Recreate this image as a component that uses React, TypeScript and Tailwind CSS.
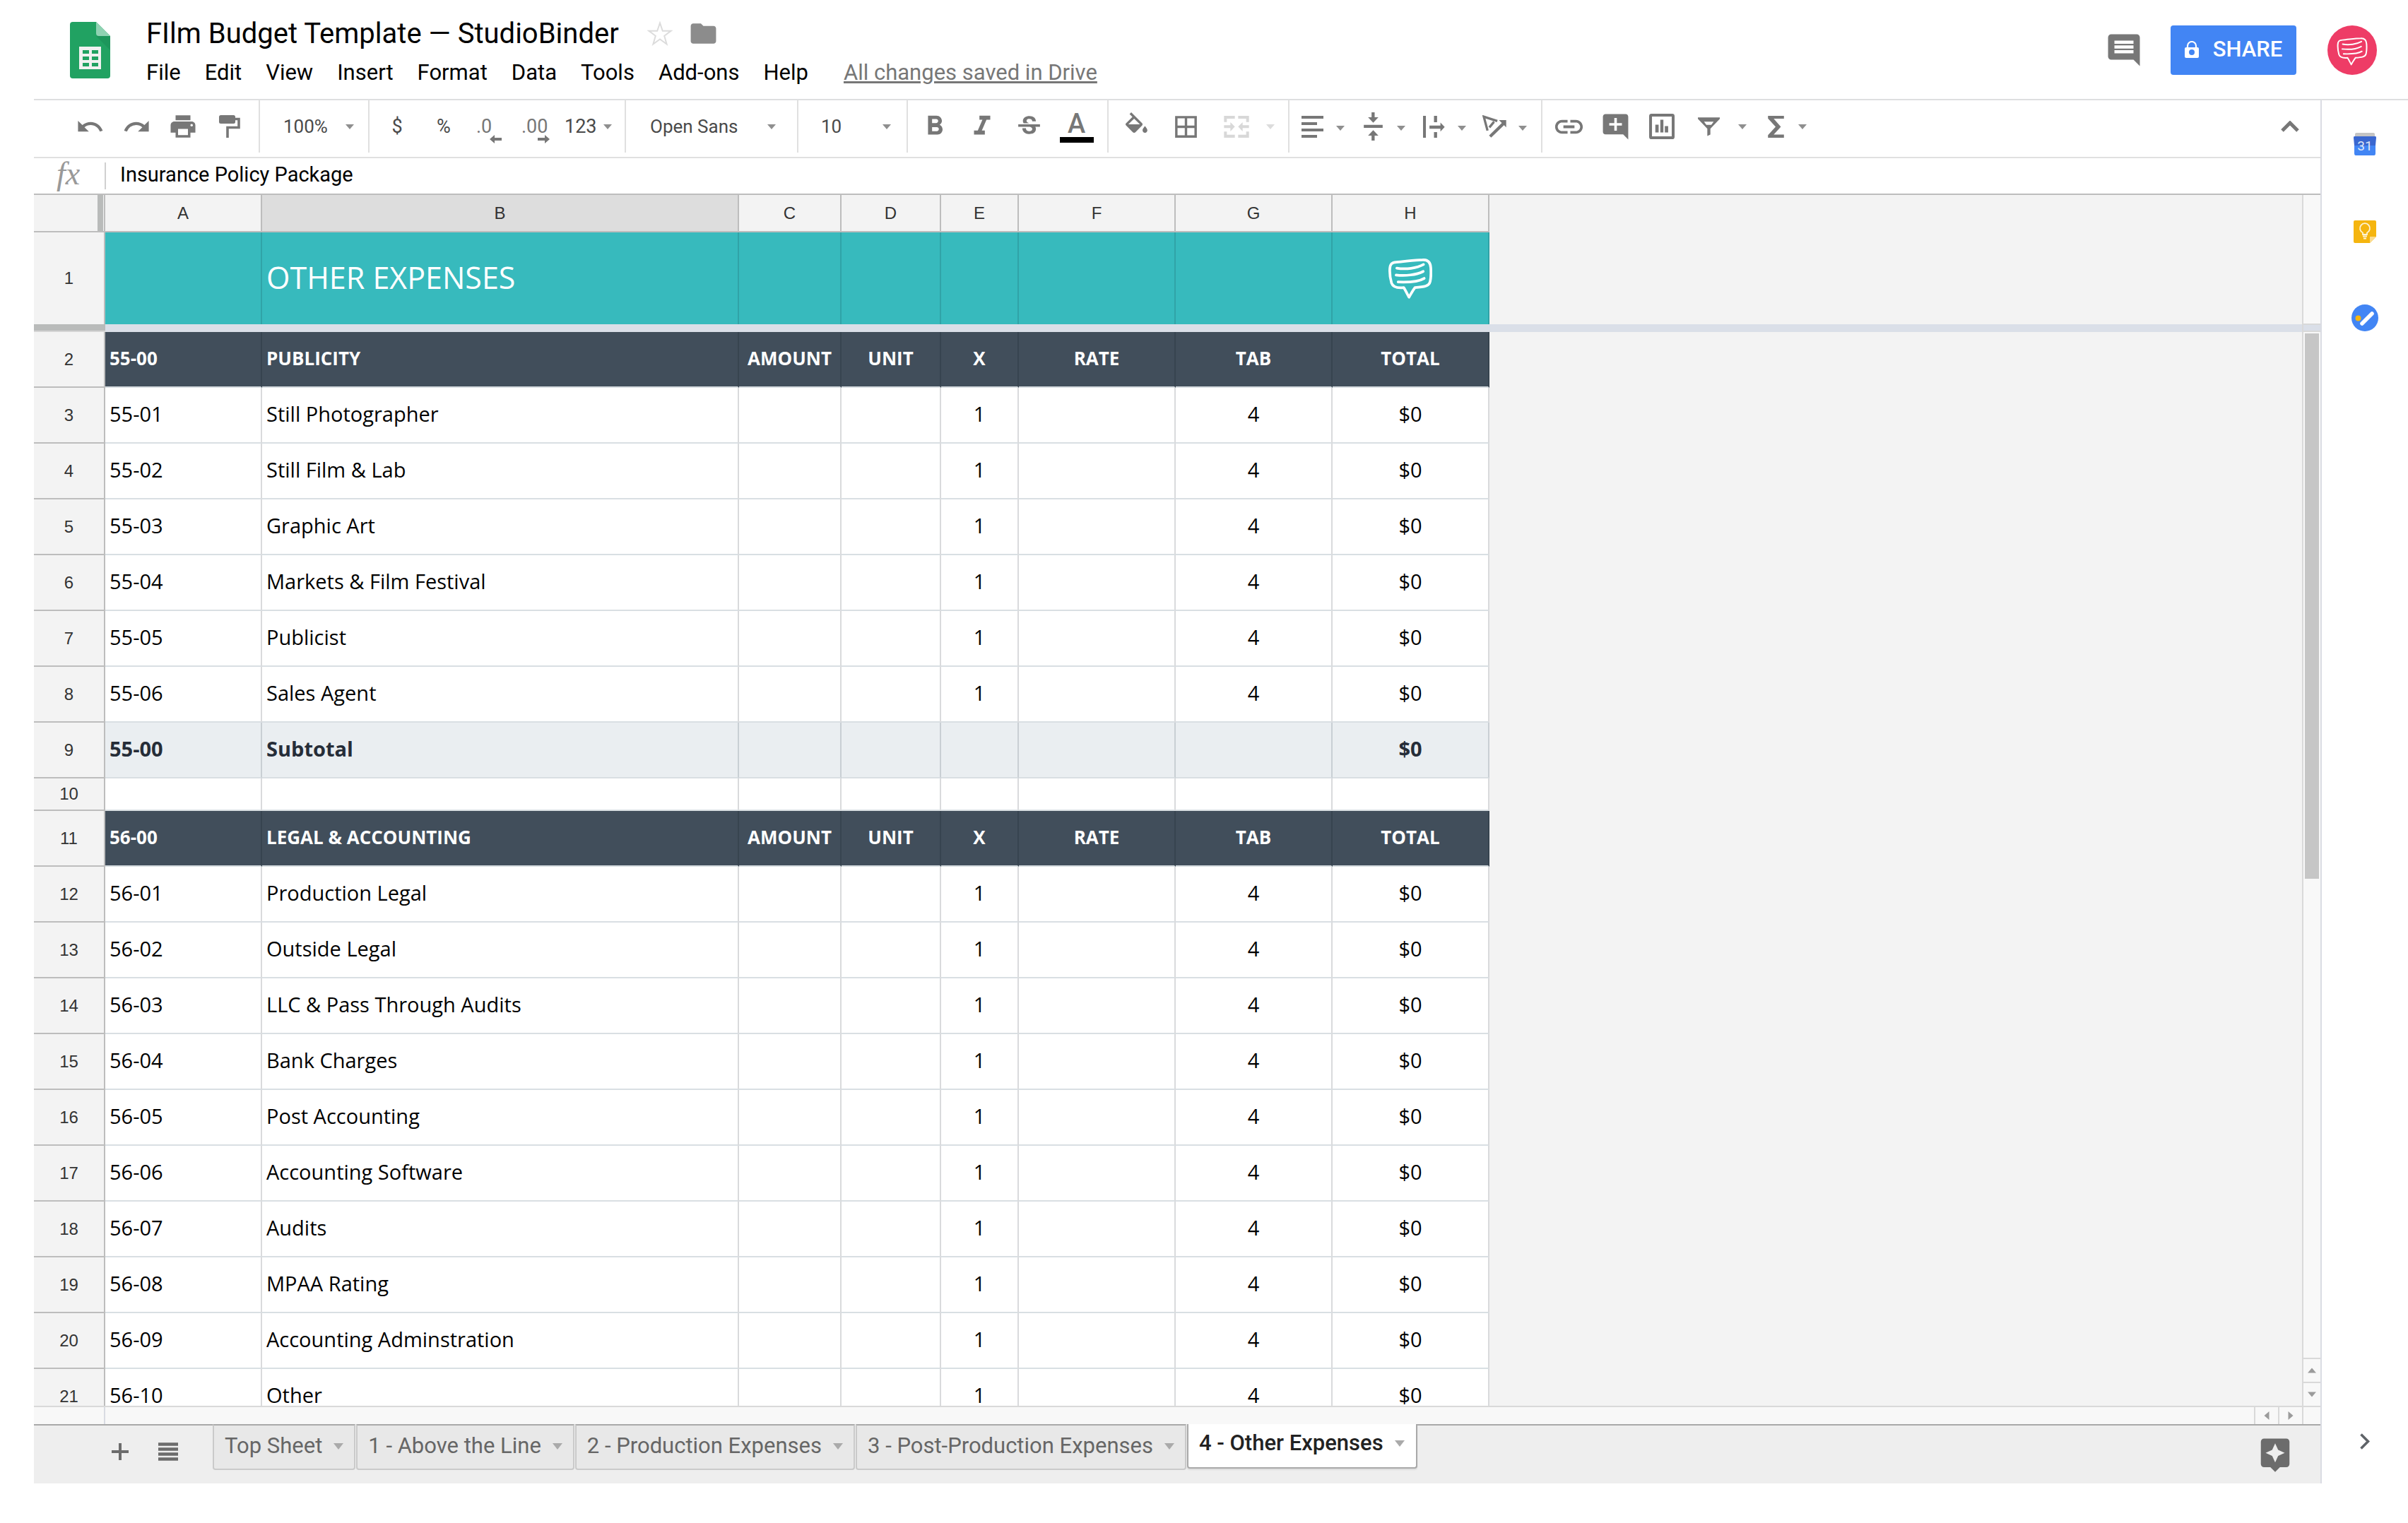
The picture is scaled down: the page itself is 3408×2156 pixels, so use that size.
import React from "react";
import {
  MdUndo,
  MdRedo,
  MdPrint,
  MdFormatBold,
  MdFormatItalic,
  MdStrikethroughS,
  MdBorderAll,
  MdLink,
  MdAddComment,
  MdComment,
  MdFolder,
  MdAssistant,
} from "react-icons/md";

type Kind = "head" | "item" | "subtotal" | "blank";
type Row = { n: number; kind: Kind; code?: string; name?: string };

const COLUMNS = ["A", "B", "C", "D", "E", "F", "G", "H"];

const ROWS: Row[] = [
  { n: 2, kind: "head", code: "55-00", name: "PUBLICITY" },
  { n: 3, kind: "item", code: "55-01", name: "Still Photographer" },
  { n: 4, kind: "item", code: "55-02", name: "Still Film & Lab" },
  { n: 5, kind: "item", code: "55-03", name: "Graphic Art" },
  { n: 6, kind: "item", code: "55-04", name: "Markets & Film Festival" },
  { n: 7, kind: "item", code: "55-05", name: "Publicist" },
  { n: 8, kind: "item", code: "55-06", name: "Sales Agent" },
  { n: 9, kind: "subtotal", code: "55-00", name: "Subtotal" },
  { n: 10, kind: "blank" },
  { n: 11, kind: "head", code: "56-00", name: "LEGAL & ACCOUNTING" },
  { n: 12, kind: "item", code: "56-01", name: "Production Legal" },
  { n: 13, kind: "item", code: "56-02", name: "Outside Legal" },
  { n: 14, kind: "item", code: "56-03", name: "LLC & Pass Through Audits" },
  { n: 15, kind: "item", code: "56-04", name: "Bank Charges" },
  { n: 16, kind: "item", code: "56-05", name: "Post Accounting" },
  { n: 17, kind: "item", code: "56-06", name: "Accounting Software" },
  { n: 18, kind: "item", code: "56-07", name: "Audits" },
  { n: 19, kind: "item", code: "56-08", name: "MPAA Rating" },
  { n: 20, kind: "item", code: "56-09", name: "Accounting Adminstration" },
  { n: 21, kind: "item", code: "56-10", name: "Other" },
];

const VALUES: Record<Kind, string[]> = {
  head: ["AMOUNT", "UNIT", "X", "RATE", "TAB", "TOTAL"],
  item: ["", "", "1", "", "4", "$0"],
  subtotal: ["", "", "", "", "", "$0"],
  blank: ["", "", "", "", "", ""],
};

const ROW_STYLE: Record<Kind, string> = {
  head: "h-[79px] bg-[#414e5b] text-[26px] font-bold text-white",
  item: "h-[79px] bg-white text-[29px] text-black",
  subtotal: "h-[79px] bg-[#eaeef1] text-[29px] font-bold text-[#262d38]",
  blank: "h-[46px] bg-white text-[24px]",
};

const CELL_BORDER: Record<Kind, string> = {
  head: "border-r-[#374450] border-b-[#d6dce0]",
  item: "border-r-[#d9dadc] border-b-[#d9dfe3]",
  subtotal: "border-r-[#c9cfd4] border-b-[#d9dfe3]",
  blank: "border-r-[#d9dadc] border-b-[#d9dfe3]",
};

function Caret({ className = "text-[#8f8f8f]" }: { className?: string }) {
  return (
    <svg width="12" height="7" viewBox="0 0 12 7" className={`shrink-0 ${className}`} aria-hidden="true">
      <path d="M0 0h12L6 7z" fill="currentColor" />
    </svg>
  );
}

function BubbleLogo({ className, stroke }: { className: string; stroke: number }) {
  return (
    <svg
      viewBox="0 0 132 122"
      className={className}
      fill="none"
      stroke="#fff"
      strokeWidth={stroke}
      strokeLinecap="round"
      strokeLinejoin="round"
      aria-hidden="true"
    >
      <path d="M24 11C50 9 80 4 103 4C120 3 127 12 128 28C129 44 129 58 126 70C123 84 108 86 80 88C74 96 68 107 62 117C56 106 51 96 46 88C28 90 14 88 9 74C5 60 3 44 4 30C5 16 10 12 24 11Z" />
      <path d="M25 29C52 34 86 29 106 18" />
      <path d="M23 50C50 53 84 50 105 39" />
      <path d="M29 71C55 72 90 71 108 60" />
    </svg>
  );
}

function SheetsLogo() {
  return (
    <svg viewBox="0 0 57 80" className="h-20 w-[57px]" aria-hidden="true">
      <path d="M4 0H37L57 20V76Q57 80 53 80H4Q0 80 0 76V4Q0 0 4 0Z" fill="#21a262" />
      <path d="M37 20H57V40Z" fill="#1a8a53" opacity=".5" />
      <path d="M37 0L57 20H41Q37 20 37 16Z" fill="#8fd2b2" />
      <path
        fillRule="evenodd"
        fill="#f1f1f1"
        d="M13 35H44V67H13ZM18 40V45H27V40ZM31 40V45H40V40ZM18 49V54H27V49ZM31 49V54H40V49ZM18 58V63H27V58ZM31 58V63H40V58Z"
      />
    </svg>
  );
}

function PaintRoller() {
  return (
    <svg width="30" height="32" viewBox="0 0 30 32" aria-hidden="true">
      <rect x="0" y="0" width="23" height="12" rx="2.5" fill="currentColor" />
      <path d="M22 5.500H28V17.500H12V32" fill="none" stroke="currentColor" strokeWidth="3.600" />
    </svg>
  );
}

function PaintBucket() {
  return (
    <svg width="31" height="29" viewBox="3 0 18 17" aria-hidden="true">
      <path
        fill="currentColor"
        d="M16.560 8.940L7.620 0 6.210 1.410l2.380 2.380-5.150 5.150a1.490 1.490 0 0 0 0 2.120l5.500 5.500c.290.290.680.440 1.060.440s.770-.150 1.060-.440l5.500-5.500c.590-.580.590-1.530 0-2.120zM5.210 10L10 5.210 14.790 10H5.210zM19 11.500s-2 2.170-2 3.500c0 1.100.900 2 2 2s2-.900 2-2c0-1.330-2-3.500-2-3.500z"
      />
    </svg>
  );
}

function MergeCells() {
  return (
    <svg width="36" height="31" viewBox="0 0 106 93" aria-hidden="true">
      <path
        fill="currentColor"
        d="M0 0H46V12H12V26H0ZM60 0H106V26H94V12H60ZM0 67H12V80H46V93H0ZM94 67H106V93H60V80H94ZM0 40H27V27L46 46 27 66V52H0ZM106 40H79V27L60 46 79 66V52H106Z"
      />
    </svg>
  );
}

function AlignLeft() {
  return (
    <svg width="31" height="31" viewBox="0 0 31 31" aria-hidden="true">
      <path fill="currentColor" d="M0 0H31V4H0ZM0 9H22V13H0ZM0 18H31V22H0ZM0 27H22V31H0Z" />
    </svg>
  );
}

function AlignMiddle() {
  return (
    <svg width="27" height="40" viewBox="0 0 80 120" aria-hidden="true">
      <path fill="currentColor" d="M0 53H80V66H0ZM33 0H46V21H62L40 44 18 21H33ZM33 120H46V99H62L40 76 18 99H33Z" />
    </svg>
  );
}

function WrapText() {
  return (
    <svg width="31" height="31" viewBox="0 0 92 92" aria-hidden="true">
      <path fill="currentColor" d="M0 0H12V92H0ZM46 0H59V27H46ZM46 68H59V92H46ZM27 41H73V28L91 47 73 66V54H27Z" />
    </svg>
  );
}

function RotateText() {
  return (
    <svg width="34" height="32" viewBox="0 0 103 96" aria-hidden="true">
      <path d="M22 66L6 6L64 25M30 52L50 28" fill="none" stroke="currentColor" strokeWidth="10" />
      <path d="M33 91L92 34" stroke="currentColor" strokeWidth="13" />
      <path d="M71 21H102V52Z" fill="currentColor" />
    </svg>
  );
}

function InsertChart() {
  return (
    <svg width="36" height="36" viewBox="0 0 107 107" aria-hidden="true">
      <rect x="6" y="6" width="95" height="95" rx="4" fill="none" stroke="currentColor" strokeWidth="12" />
      <path fill="currentColor" d="M26 46H40V79H26ZM47 25H60V79H47ZM66 52H80V79H66Z" />
    </svg>
  );
}

function Funnel() {
  return (
    <svg width="31" height="27" viewBox="0 0 93 80" aria-hidden="true">
      <path fillRule="evenodd" fill="currentColor" d="M0 0H93V6L53 48V73L40 79V48L0 6ZM26 18L36 32H57L67 18Z" />
    </svg>
  );
}

function Sigma() {
  return (
    <svg width="23" height="31" viewBox="0 0 67 92" aria-hidden="true">
      <path fill="currentColor" d="M0 0H67V12H24L54 46 24 79H67V92H0V81L32 46 0 11Z" />
    </svg>
  );
}

function DecimalArrow({ right = false }: { right?: boolean }) {
  return (
    <svg width="17" height="12" viewBox="0 0 17 12" aria-hidden="true">
      <path fill="currentColor" d={right ? "M17 6L10 0V4H0V8H10V12Z" : "M0 6L7 0V4H17V8H7V12Z"} />
    </svg>
  );
}

function Tool({ label, width = "w-[66px]", children }: { label: string; width?: string; children: React.ReactNode }) {
  return (
    <button type="button" aria-label={label} className={`flex h-full shrink-0 items-center justify-center ${width}`}>
      {children}
    </button>
  );
}

function ToolSelect({ label, value, className }: { label: string; value: string; className: string }) {
  return (
    <label className={`flex h-full shrink-0 items-center border-r-2 border-[#e0e0e0] ${className}`}>
      <select
        aria-label={label}
        defaultValue={value}
        className="min-w-0 flex-1 appearance-none bg-transparent p-0 text-[26px] text-[#4a4a4a] outline-none"
      >
        <option>{value}</option>
      </select>
      <Caret />
    </label>
  );
}

function AlignTool({ label, children }: { label: string; children: React.ReactNode }) {
  return (
    <button type="button" aria-label={label} className="mr-1.5 flex h-full shrink-0 items-center">
      <span className="flex w-[52px] justify-center">{children}</span>
      <span className="flex w-7 justify-center pt-1">
        <Caret />
      </span>
    </button>
  );
}

const GROUP = "flex h-full shrink-0 items-center border-r-2 border-[#e0e0e0]";

function Toolbar() {
  return (
    <div role="toolbar" aria-label="Formatting" className="flex h-[82px] shrink-0 items-start border-b-2 border-[#e0e0e0] text-[#777]">
      <div className="flex h-[78px] flex-1 items-center pb-1">
        <div className={`${GROUP} pr-2 pl-[46px]`}>
          <Tool label="Undo"><MdUndo size={41} /></Tool>
          <Tool label="Redo"><MdRedo size={41} /></Tool>
          <Tool label="Print"><MdPrint size={42} /></Tool>
          <Tool label="Paint format"><PaintRoller /></Tool>
        </div>
        <ToolSelect label="Zoom" value="100%" className="w-[155px] pr-5 pl-[33px]" />
        <div className={`${GROUP} w-[363px] pl-1.5 text-[27px] text-[#4a4a4a]`}>
          <Tool label="Format as currency">$</Tool>
          <Tool label="Format as percent">%</Tool>
          <Tool label="Decrease decimal places">
            <span className="mr-1 flex w-9 flex-col pt-3 text-left leading-6 text-[#777]">
              .0
              <span className="self-end"><DecimalArrow /></span>
            </span>
          </Tool>
          <Tool label="Increase decimal places">
            <span className="mr-1 flex w-10 flex-col pt-3 text-left leading-6 text-[#777]">
              .00
              <span className="self-end"><DecimalArrow right /></span>
            </span>
          </Tool>
          <button type="button" aria-label="More formats" className="flex h-full flex-1 items-center justify-between pr-[18px] pl-1.5">
            123
            <Caret />
          </button>
        </div>
        <ToolSelect label="Font" value="Open Sans" className="w-[244px] pr-[30px] pl-[34px]" />
        <ToolSelect label="Font size" value="10" className="w-[155px] pr-[22px] pl-8" />
        <div className={`${GROUP} w-[284px] pl-1`}>
          <Tool label="Bold" width="w-[67px]"><MdFormatBold size={46} /></Tool>
          <Tool label="Italic" width="w-[67px]"><MdFormatItalic size={46} /></Tool>
          <Tool label="Strikethrough" width="w-[67px]"><MdStrikethroughS size={41} /></Tool>
          <Tool label="Text color" width="w-[67px]">
            <span className="flex w-12 flex-col items-center border-b-8 border-black text-[38px] leading-[38px] font-medium">A</span>
          </Tool>
        </div>
        <div className={`${GROUP} w-[256px] pl-1`}>
          <Tool label="Fill color" width="w-[70px]"><span className="pb-3"><PaintBucket /></span></Tool>
          <Tool label="Borders" width="w-[70px]"><MdBorderAll size={41} /></Tool>
          <Tool label="Merge cells" width="w-[94px]">
            <span className="flex items-center gap-6 pl-4 text-[#d8d8d8]">
              <MergeCells />
              <Caret className="text-[#dcdcdc]" />
            </span>
          </Tool>
        </div>
        <div className={`${GROUP} w-[358px] pl-1.5`}>
          <AlignTool label="Horizontal align"><AlignLeft /></AlignTool>
          <AlignTool label="Vertical align"><AlignMiddle /></AlignTool>
          <AlignTool label="Text wrapping"><WrapText /></AlignTool>
          <AlignTool label="Text rotation"><RotateText /></AlignTool>
        </div>
        <div className="flex h-full items-center pl-1">
          <Tool label="Insert link"><MdLink size={47} /></Tool>
          <Tool label="Insert comment"><MdAddComment size={43} /></Tool>
          <Tool label="Insert chart"><InsertChart /></Tool>
          <Tool label="Create a filter"><Funnel /></Tool>
          <Tool label="Filter views" width="w-[30px]"><Caret /></Tool>
          <Tool label="Functions" width="w-24">
            <span className="flex items-center gap-5"><Sigma /><Caret /></span>
          </Tool>
        </div>
        <button type="button" aria-label="Hide the menus" className="mr-[29px] ml-auto flex h-full w-7 items-center justify-center">
          <svg width="26" height="16" viewBox="0 0 26 16" aria-hidden="true">
            <path d="M2 14L13 3L24 14" fill="none" stroke="currentColor" strokeWidth="5" />
          </svg>
        </button>
      </div>
    </div>
  );
}

function Header() {
  return (
    <header className="flex h-[142px] shrink-0 border-b-2 border-[#dedfe0] pl-[51px]">
      <div className="w-[108px] pt-[31px]">
        <SheetsLogo />
      </div>
      <div className="flex flex-col gap-4 pt-[26px]">
        <div className="flex items-center text-[40px] leading-10 text-black">
          <h1>FIlm Budget Template — StudioBinder</h1>
          <button type="button" aria-label="Star" className="ml-10">
            <svg width="36" height="36" viewBox="0 0 36 36" aria-hidden="true">
              <path
                d="M18 2.500L21.800 13.800H33.500L24.200 20.800L27.600 32.500L18 25.500L8.400 32.500L11.800 20.800L2.500 13.800H14.200Z"
                fill="none"
                stroke="#dcdcdc"
                strokeWidth="2"
              />
            </svg>
          </button>
          <button type="button" aria-label="Move to folder" className="ml-[22px] text-[#8c8c8c]">
            <MdFolder size={43} />
          </button>
        </div>
        <nav className="flex items-center gap-[34px] text-[31px] leading-9 text-black">
          {["File", "Edit", "View", "Insert", "Format", "Data", "Tools", "Add-ons", "Help"].map((m) => (
            <button type="button" key={m}>{m}</button>
          ))}
          <a href="#saved" className="ml-4 text-[#777] underline">All changes saved in Drive</a>
        </nav>
      </div>
      <div className="mt-9 mr-11 ml-auto flex h-[70px] items-center">
        <button type="button" aria-label="Comments" className="mr-[39px] text-[#777]">
          <MdComment size={54} />
        </button>
        <button type="button" className="flex h-[70px] w-[178px] items-center justify-center gap-5 rounded-[4px] bg-[#4285f4] pb-0.5 text-[31px] font-medium text-white">
          <svg width="20" height="24" viewBox="0 0 20 24" aria-hidden="true">
            <path d="M4 10V7a6 6 0 0 1 12 0v3" fill="none" stroke="#fff" strokeWidth="2.200" />
            <path fillRule="evenodd" fill="#fff" d="M2 9H18Q20 9 20 11V22Q20 24 18 24H2Q0 24 0 22V11Q0 9 2 9ZM10 12a4 4 0 1 0 0 8a4 4 0 1 0 0-8Z" />
          </svg>
          SHARE
        </button>
        <button type="button" aria-label="Account" className="ml-11 flex size-[70px] items-center justify-center rounded-full bg-[#ee3c66]">
          <BubbleLogo className="mt-1 h-10 w-11" stroke={6} />
        </button>
      </div>
    </header>
  );
}

function Columns() {
  return (
    <colgroup>
      <col className="w-[101px]" />
      <col className="w-[222px]" />
      <col className="w-[675px]" />
      <col className="w-[145px]" />
      <col className="w-[141px]" />
      <col className="w-[110px]" />
      <col className="w-[222px]" />
      <col className="w-[222px]" />
      <col className="w-[222px]" />
    </colgroup>
  );
}

const TABLE = "w-[2060px] table-fixed border-separate border-spacing-0";
const ROW_HEAD =
  "border-r-2 border-b-2 border-[#bdbdbd] bg-[#f3f3f3] p-0 text-center font-['Liberation_Sans',Arial,sans-serif] text-[24px] leading-none font-normal text-[#333]";

function Grid() {
  const banner = "border-r-2 border-[#30a3a7] p-0 pb-1";
  return (
    <div className="flex min-w-0 flex-1 flex-col overflow-hidden bg-[#f3f3f3]">
      <table className={TABLE}>
        <Columns />
        <thead>
          <tr className="h-[53px] font-['Liberation_Sans',Arial,sans-serif] text-[24px] leading-none text-[#333]">
            <td className="border-r-2 border-b-2 border-[#bdbdbd] p-0">
              <div className="ml-auto mr-px h-[51px] w-2 bg-[#b9bbba]" />
            </td>
            {COLUMNS.map((c) => (
              <th
                key={c}
                scope="col"
                className={`border-r-2 border-b-2 border-[#bdbdbd] p-0 text-center font-normal ${c === "B" ? "bg-[#dddddd]" : "bg-[#f3f3f3]"}`}
              >
                {c}
              </th>
            ))}
          </tr>
        </thead>
        <tbody>
          <tr className="h-[130px] bg-[#37babd] text-white">
            <th scope="row" className="border-r-2 border-[#bdbdbd] bg-[#f3f3f3] p-0 text-center font-['Liberation_Sans',Arial,sans-serif] text-[24px] leading-none font-normal text-[#333]">
              1
            </th>
            <td className={banner} />
            <td className={`${banner} pl-1.5 text-[43px] leading-none`}>OTHER EXPENSES</td>
            <td className={banner} />
            <td className={banner} />
            <td className={banner} />
            <td className={banner} />
            <td className={banner} />
            <td className={banner}>
              <BubbleLogo className="mx-auto mt-1 h-[57px] w-[62px]" stroke={8} />
            </td>
          </tr>
        </tbody>
      </table>
      <div className="flex h-[11px] shrink-0 bg-[#dadfe8]">
        <div className="w-[101px] border-b-2 border-[#d5d5d5] bg-[#b9bbba]" />
      </div>
      <div className="min-h-0 flex-1 overflow-hidden">
        <table className={TABLE}>
          <Columns />
          <tbody>
            {ROWS.map((r) => (
              <tr key={r.n} className={ROW_STYLE[r.kind]}>
                <th scope="row" className={ROW_HEAD}>{r.n}</th>
                <td className={`border-r-2 border-b-2 p-0 pb-1 pl-1.5 leading-7 ${CELL_BORDER[r.kind]}`}>{r.code}</td>
                <td className={`border-r-2 border-b-2 p-0 pb-1 pl-1.5 leading-7 ${CELL_BORDER[r.kind]}`}>{r.name}</td>
                {VALUES[r.kind].map((v, i) => (
                  <td key={i} className={`border-r-2 border-b-2 p-0 pb-1 text-center leading-7 ${CELL_BORDER[r.kind]}`}>{v}</td>
                ))}
              </tr>
            ))}
          </tbody>
        </table>
      </div>
    </div>
  );
}

function ScrollArrow({ label, d, className }: { label: string; d: string; className: string }) {
  return (
    <button type="button" aria-label={label} className={`flex shrink-0 items-center justify-center border-[#d9d9d9] ${className}`}>
      <svg width="12" height="12" viewBox="0 0 12 12" aria-hidden="true">
        <path d={d} fill="#9b9b9b" />
      </svg>
    </button>
  );
}

function VerticalScroll() {
  return (
    <div className="flex w-[26px] shrink-0 flex-col border-l-2 border-[#d9d9d9] bg-[#f8f8f8]">
      <div className="h-[182px] shrink-0" />
      <div className="h-3 shrink-0 border-y-2 border-[#d9d9d9] bg-[#dadfe8]" />
      <div className="flex flex-1 flex-col p-0.5">
        <div className="flex-[8] bg-[#c6c6c6]" />
        <div className="flex-[7]" />
      </div>
      <ScrollArrow label="Scroll up" d="M0 9.500H12L6 2.500Z" className="h-[34px] border-t-2" />
      <ScrollArrow label="Scroll down" d="M0 2.500H12L6 9.500Z" className="h-[34px] border-t-2" />
    </div>
  );
}

function HorizontalScroll() {
  return (
    <div className="flex h-[26px] shrink-0 border-t-2 border-[#d9d9d9] bg-[#f8f8f8]">
      <div className="w-[101px] border-r-2 border-[#d9dce2]" />
      <div className="flex-1" />
      <ScrollArrow label="Scroll left" d="M9.500 0V12L2.500 6Z" className="w-[34px] border-l-2" />
      <ScrollArrow label="Scroll right" d="M2.500 0V12L9.500 6Z" className="w-[34px] border-l-2" />
      <div className="w-[26px] border-l-2 border-[#d9d9d9]" />
    </div>
  );
}

const TABS = ["Top Sheet", "1 - Above the Line", "2 - Production Expenses", "3 - Post-Production Expenses"];

function TabCaret() {
  return (
    <svg width="14" height="9" viewBox="0 0 14 9" className="shrink-0" aria-hidden="true">
      <path d="M0 0H14L7 9Z" fill="#aaa" />
    </svg>
  );
}

function SheetTabs() {
  return (
    <div className="flex h-[84px] shrink-0 items-start bg-[#eee]">
      <div className="flex h-full w-[253px] items-center gap-[42px] border-t-2 border-[#a9a9a9] pb-2 pl-[110px] text-[#6c6c6c]">
        <button type="button" aria-label="Add sheet">
          <svg width="24" height="24" viewBox="0 0 24 24" aria-hidden="true">
            <path d="M12 0V24M0 12H24" stroke="currentColor" strokeWidth="4" />
          </svg>
        </button>
        <button type="button" aria-label="All sheets">
          <svg width="28" height="26" viewBox="0 0 28 26" aria-hidden="true">
            <path d="M0 2.500H28M0 9.500H28M0 16.500H28M0 23.500H28" stroke="currentColor" strokeWidth="4.500" />
          </svg>
        </button>
      </div>
      {TABS.map((t) => (
        <button
          type="button"
          key={t}
          className="mr-px flex h-[65px] items-center gap-4 rounded-b-[4px] border-2 border-t-[#a9a9a9] border-r-[#cacaca] border-b-[#cacaca] border-l-[#cacaca] bg-[#e8e8e8] pr-[15px] pb-0.5 pl-[15px] text-[31px] text-[#666]"
        >
          {t}
          <TabCaret />
        </button>
      ))}
      <button
        type="button"
        className="flex h-[63px] items-center gap-4 rounded-b-[4px] border-2 border-t-0 border-[#a9a9a9] bg-white pr-4 pb-1.5 pl-[15px] text-[31px] font-medium text-[#222] shadow-[0_2px_2px_rgba(0,0,0,0.08)]"
      >
        4 - Other Expenses
        <TabCaret />
      </button>
      <div className="flex h-full flex-1 justify-end border-t-2 border-[#a9a9a9] pt-3.5 pr-[37px] text-[#6c6c6c]">
        <button type="button" aria-label="Explore" className="size-[54px]">
          <MdAssistant size={54} />
        </button>
      </div>
    </div>
  );
}

function SidePanel() {
  return (
    <aside className="flex w-[124px] shrink-0 flex-col items-center border-l-2 border-[#dadce3] pt-[46px] pb-12">
      <button type="button" aria-label="Calendar">
        <svg width="32" height="32" viewBox="0 0 32 32" aria-hidden="true">
          <path d="M2 2Q2 0 4 0H28Q30 0 30 2V8H2Z" fill="#c4c4c4" />
          <path d="M1 5H31Q32 5 32 7L31 18H1L0 7Q0 5 1 5Z" fill="#3a67d0" />
          <path d="M1 18H31V29Q31 32 29 32H3Q1 32 1 29Z" fill="#4285f4" />
          <text x="16" y="25" textAnchor="middle" fontFamily="Roboto, sans-serif" fontSize="19" fill="#dfe6f5">31</text>
        </svg>
      </button>
      <button type="button" aria-label="Keep" className="mt-[92px]">
        <svg width="32" height="32" viewBox="0 0 32 32" aria-hidden="true">
          <path d="M2 0H30Q32 0 32 2V23L23 32H2Q0 32 0 30V2Q0 0 2 0Z" fill="#f5b50f" />
          <path d="M23 23H32L23 32Z" fill="#fbdc90" />
          <path d="M13 20V17.500A7 7 0 1 1 19 17.500V20ZM13 22.500H19M14 25.500H18" fill="none" stroke="#fdf3d6" strokeWidth="1.800" />
        </svg>
      </button>
      <button type="button" aria-label="Tasks" className="mt-[87px]">
        <svg width="38" height="38" viewBox="0 0 38 38" aria-hidden="true">
          <circle cx="19" cy="19" r="19" fill="#4285f4" />
          <circle cx="9.500" cy="19.500" r="4" fill="#f5b50f" />
          <path d="M15 27L29 13" stroke="#fff" strokeWidth="5.500" strokeLinecap="round" />
        </svg>
      </button>
      <button type="button" aria-label="Hide side panel" className="mt-auto">
        <svg width="14" height="23" viewBox="0 0 14 23" aria-hidden="true">
          <path d="M1.500 1.500L11.500 11.500L1.500 21.500" fill="none" stroke="#5f6368" strokeWidth="3.600" />
        </svg>
      </button>
    </aside>
  );
}

export default function App() {
  return (
    <div className="flex h-screen flex-col bg-white pb-[56px] pl-12 font-[Roboto,sans-serif]">
      <Header />
      <div className="flex min-h-0 flex-1">
        <main className="flex min-w-0 flex-1 flex-col">
          <Toolbar />
          <div className="flex h-[52px] shrink-0 items-center border-b-2 border-[#bdbdbd]">
            <label
              htmlFor="formula"
              className="flex h-[38px] w-[102px] items-center border-r-2 border-[#d0d0d0] pb-1.5 pl-8 font-['Liberation_Serif',serif] text-[46px] leading-none text-[#999] italic"
            >
              fx
            </label>
            <input
              id="formula"
              defaultValue="Insurance Policy Package"
              className="h-full flex-1 pb-1 pl-5 text-[29px] text-black outline-none"
            />
          </div>
          <div className="flex min-h-0 flex-1 font-['Open_Sans',sans-serif]">
            <Grid />
            <VerticalScroll />
          </div>
          <HorizontalScroll />
          <SheetTabs />
        </main>
        <SidePanel />
      </div>
    </div>
  );
}
